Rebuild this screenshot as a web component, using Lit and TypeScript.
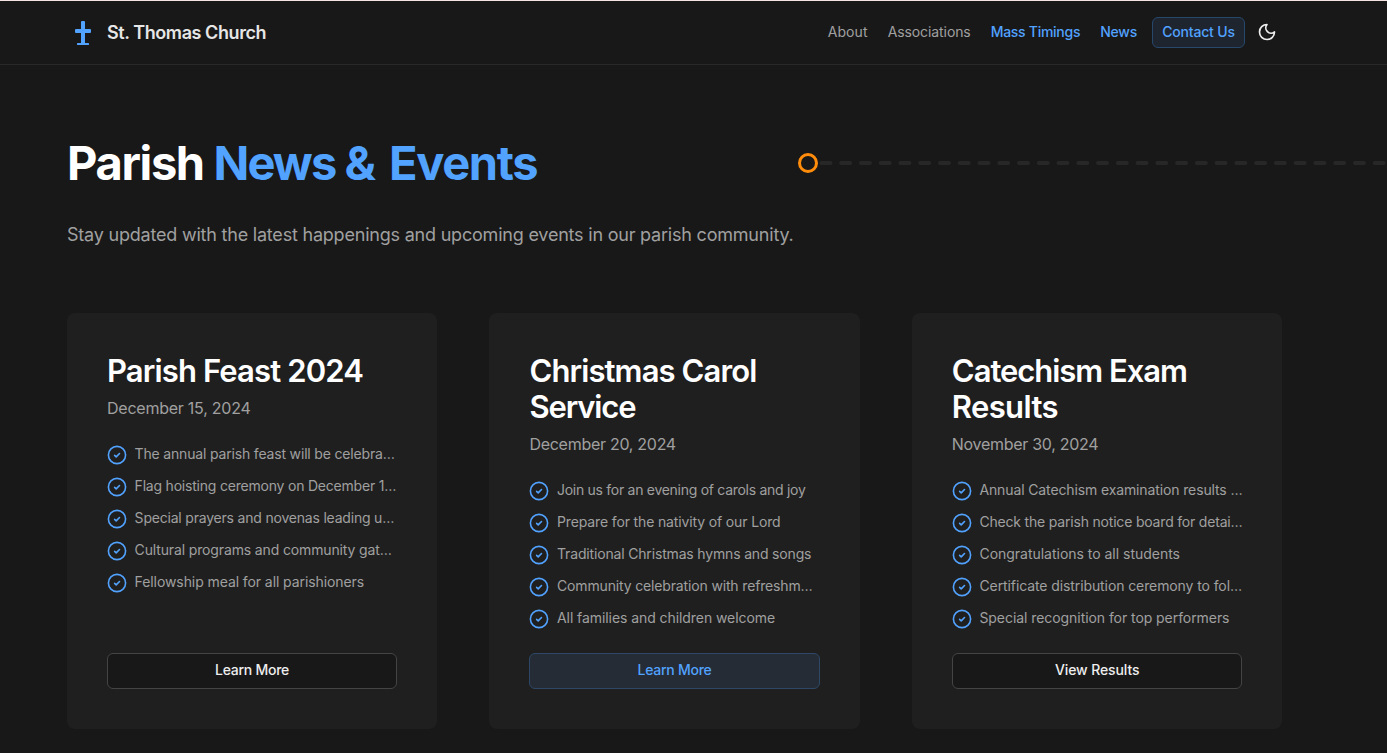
import { LitElement, html, css, svg } from "lit";
import { customElement } from "lit/decorators.js";
import { styleMap } from "lit/directives/style-map.js";

const FAMILY = 'Inter, "Liberation Sans", sans-serif';
const ctx = document.createElement("canvas").getContext("2d")!;

/** Tracks a line of text so that its advance equals the given width. */
function fit(text: string, size: number, weight: number, width: number) {
  ctx.font = `${weight} ${size}px ${FAMILY}`;
  const natural = ctx.measureText(text).width;
  const spacing = (width - natural) / text.length;
  return html`<span style=${styleMap({ letterSpacing: `${spacing.toFixed(3)}px` })}>${text}</span>`;
}

type Line = [text: string, width: number];
interface EventCard {
  title: Line[];
  date: Line;
  items: Line[];
  action: Line;
  active?: boolean;
}

const EVENTS: EventCard[] = [
  {
    title: [["Parish Feast 2024", 256]],
    date: ["December 15, 2024", 143.5],
    items: [
      ["The annual parish feast will be celebra…", 260],
      ["Flag hoisting ceremony on December 1…", 261.5],
      ["Special prayers and novenas leading u…", 259.5],
      ["Cultural programs and community gat…", 257],
      ["Fellowship meal for all parishioners", 229.5],
    ],
    action: ["Learn More", 74],
  },
  {
    title: [["Christmas Carol", 227], ["Service", 106]],
    date: ["December 20, 2024", 146.5],
    items: [
      ["Join us for an evening of carols and joy", 248.5],
      ["Prepare for the nativity of our Lord", 223.5],
      ["Traditional Christmas hymns and songs", 254.3],
      ["Community celebration with refreshm…", 255.5],
      ["All families and children welcome", 218],
    ],
    action: ["Learn More", 74],
    active: true,
  },
  {
    title: [["Catechism Exam", 235], ["Results", 106]],
    date: ["November 30, 2024", 146.5],
    items: [
      ["Annual Catechism examination results …", 263],
      ["Check the parish notice board for detai…", 263],
      ["Congratulations to all students", 200.5],
      ["Certificate distribution ceremony to fol…", 262.5],
      ["Special recognition for top performers", 250],
    ],
    action: ["View Results", 84.5],
  },
];

const check = svg`<svg class="check" viewBox="0 0 20 20" width="20" height="20" fill="none">
  <circle cx="10" cy="10" r="8.6" stroke="currentColor" stroke-width="1.6"/>
  <path d="M7.6 10.4 9.2 11.9 12.5 8.5" stroke="currentColor" stroke-width="1.6" stroke-linecap="round" stroke-linejoin="round"/>
</svg>`;

@customElement("app-root")
export class AppRoot extends LitElement {
  static styles = css`
    :host {
      display: block;
      height: 753px;
      overflow: hidden;
      background: #181818;
      color: #fff;
      font-family: Inter, "Liberation Sans", sans-serif;
    }
    * { box-sizing: border-box; }
    h1, h2, p, ul { margin: 0; padding: 0; }
    span, a { white-space: pre; }
    header {
      height: 65px;
      border-top: 1px solid #f3e3e3;
      border-bottom: 1px solid #292929;
      padding: 0 105px 0 67px;
      display: flex;
      align-items: center;
      justify-content: space-between;
    }
    .brand {
      display: flex;
      align-items: center;
      gap: 8px;
      font-size: 18px;
      font-weight: 560;
      line-height: 28px;
      color: #e6e6e6;
    }
    .cross { display: block; color: #52a2ff; }
    nav {
      display: flex;
      align-items: center;
      font-size: 14px;
      font-weight: 500;
      line-height: 20px;
      color: #52a2ff;
      padding-right: 5px;
    }
    nav a { margin-right: 20px; padding-bottom: 2px; }
    nav .muted { color: #a0a0a0; font-weight: 400; }
    nav .last { margin-right: 15px; }
    nav .contact {
      width: 93px;
      height: 31px;
      margin-right: 12px;
      border: 1px solid #27476b;
      border-radius: 6px;
      background: #1e252f;
      display: grid;
      place-items: center;
    }
    .moon { display: block; color: #eee; margin-bottom: 2px; }
    main { padding: 70px 0 0 67px; }
    .hero { display: flex; align-items: center; height: 56px; }
    h1 { width: 731px; font-size: 47px; line-height: 56px; font-weight: 700; white-space: pre; }
    .accent { color: #52a2ff; }
    .track { display: block; flex: none; }
    .lead { margin-top: 30px; font-size: 18px; line-height: 28px; color: #a0a0a0; }
    .cards {
      margin: 64px 104.55px 0 0;
      display: grid;
      grid-template-columns: repeat(3, 1fr);
      gap: 52.25px;
    }
    .card {
      height: 416px;
      padding: 40px;
      border-radius: 8px;
      background: #1f1f1f;
      display: flex;
      flex-direction: column;
    }
    h2 { font-size: 31px; line-height: 36px; font-weight: 580; }
    h2 span { display: block; }
    .date { margin-top: 7px; font-size: 16px; line-height: 24px; color: #a0a0a0; }
    ul {
      list-style: none;
      margin-top: 24px;
      display: flex;
      flex-direction: column;
      gap: 12px;
      font-size: 14px;
      line-height: 20px;
      color: #a0a0a0;
    }
    li { display: flex; align-items: center; gap: 7.6px; height: 20px; }
    .check { display: block; flex: none; color: #52a2ff; margin-top: 2px; }
    .action {
      margin-top: auto;
      height: 36px;
      border: 1px solid #444;
      border-radius: 6px;
      background: #181818;
      color: #eee;
      font: inherit;
      font-size: 14px;
      font-weight: 500;
      line-height: 20px;
      padding: 0 0 2px;
    }
    .active { background: #252c35; border-color: #2d4866; color: #52a2ff; }
  `;

  private card(e: EventCard) {
    return html`<article class="card">
      <h2>${e.title.map(([t, w]) => fit(t, 31, 580, w))}</h2>
      <p class="date">${fit(e.date[0], 16, 400, e.date[1])}</p>
      <ul>
        ${e.items.map(([t, w]) => html`<li>${check}${fit(t, 14, 400, w)}</li>`)}
      </ul>
      <button class="action ${e.active ? "active" : ""}">${fit(e.action[0], 14, 500, e.action[1])}</button>
    </article>`;
  }

  render() {
    return html`
      <header>
        <div class="brand">
          <svg class="cross" width="32" height="32" viewBox="0 0 32 32" fill="currentColor">
            <rect x="14" y="4" width="4" height="24" rx="1"/>
            <rect x="8" y="12" width="16" height="4" rx="1"/>
            <rect x="10" y="26" width="12" height="2" rx="0.6"/>
          </svg>
          ${fit("St. Thomas Church", 18, 560, 159.5)}
        </div>
        <nav>
          <a class="muted">${fit("About", 14, 400, 40)}</a>
          <a class="muted">${fit("Associations", 14, 400, 83)}</a>
          <a>${fit("Mass Timings", 14, 500, 89.5)}</a>
          <a class="last">${fit("News", 14, 500, 36.8)}</a>
          <a class="contact">${fit("Contact Us", 14, 500, 72.5)}</a>
          <svg class="moon" width="20" height="20" viewBox="0 0 24 24" fill="none" stroke="currentColor" stroke-width="2" stroke-linecap="round" stroke-linejoin="round">
            <path d="M12 3a6.4 6.4 0 0 0 9 9 9 9 0 1 1-9-9Z"/>
          </svg>
        </nav>
      </header>
      <main>
        <div class="hero">
          <h1>${fit("Parish ", 47, 700, 146.5)}<span class="accent">${fit("News ", 47, 700, 131)}${fit("&", 47, 700, 34)}${fit(" ", 47, 700, 10.5)}${fit("Events", 47, 700, 148)}</span></h1>
          <svg class="track" width="589" height="24" viewBox="0 0 589 24" fill="none">
            <path d="M23.4 12H600" stroke="#272727" stroke-width="4" stroke-linecap="round" stroke-dasharray="9 10.76"/>
            <circle cx="10" cy="12" r="8.5" fill="#181818" stroke="#ff8c0a" stroke-width="3"/>
          </svg>
        </div>
        <p class="lead">${fit("Stay updated with the latest happenings and upcoming events in our parish community.", 18, 400, 726.5)}</p>
        <section class="cards">${EVENTS.map((e) => this.card(e))}</section>
      </main>
    `;
  }
}
